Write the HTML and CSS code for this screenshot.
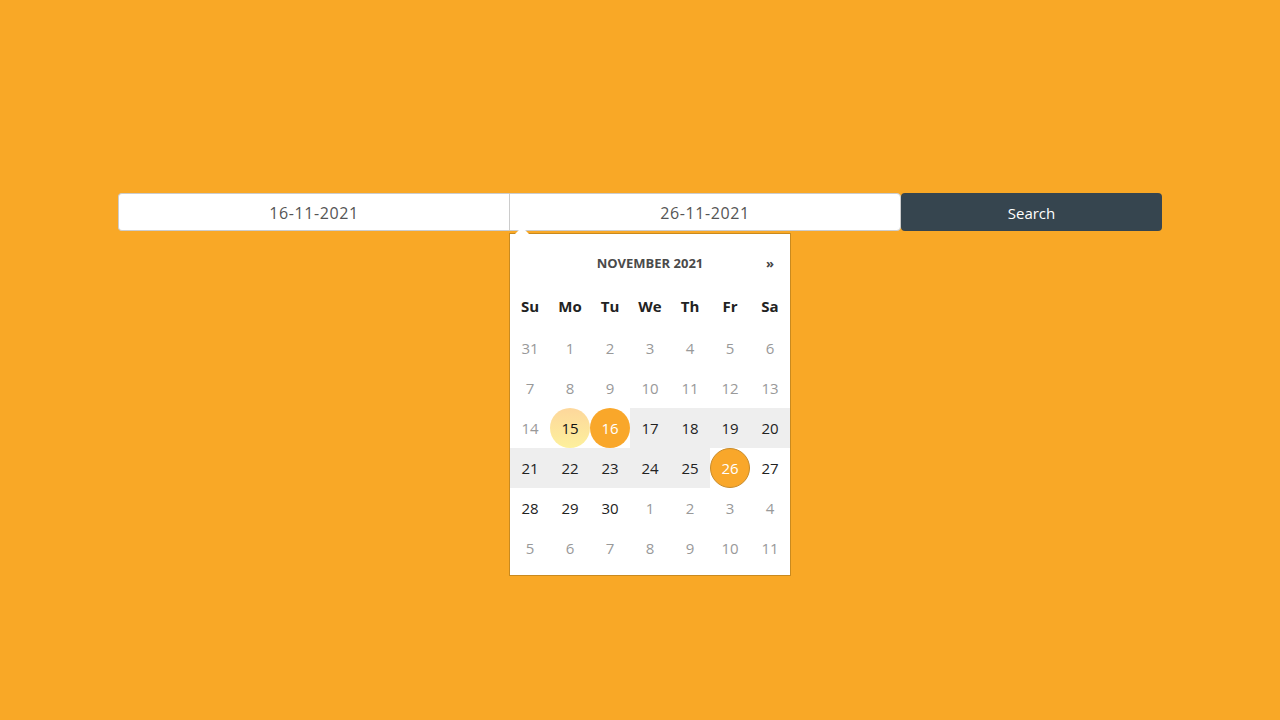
FILE: index.html
```html
<!DOCTYPE html>
<html lang="en">
<head>
<meta charset="utf-8">
<title>Date range</title>
<link rel="stylesheet" href="styles.css">
</head>
<body>
<div class="bar">
  <div class="field field-left">16-11-2021</div>
  <div class="field field-mid">26-11-2021
    <div class="picker">
      <span class="caret"></span>
      <div class="head">
        <span class="month">NOVEMBER 2021</span>
        <span class="next">»</span>
      </div>
      <div class="grid">
        <div class="dn">Su</div><div class="dn">Mo</div><div class="dn">Tu</div><div class="dn">We</div><div class="dn">Th</div><div class="dn">Fr</div><div class="dn">Sa</div>
        <div class="d off">31</div><div class="d off">1</div><div class="d off">2</div><div class="d off">3</div><div class="d off">4</div><div class="d off">5</div><div class="d off">6</div>
        <div class="d off">7</div><div class="d off">8</div><div class="d off">9</div><div class="d off">10</div><div class="d off">11</div><div class="d off">12</div><div class="d off">13</div>
        <div class="d off">14</div><div class="d"><span class="today">15</span></div><div class="d"><span class="sel">16</span></div><div class="d rng">17</div><div class="d rng">18</div><div class="d rng">19</div><div class="d rng">20</div>
        <div class="d rng">21</div><div class="d rng">22</div><div class="d rng">23</div><div class="d rng">24</div><div class="d rng">25</div><div class="d"><span class="sel sel-end">26</span></div><div class="d">27</div>
        <div class="d">28</div><div class="d">29</div><div class="d">30</div><div class="d off">1</div><div class="d off">2</div><div class="d off">3</div><div class="d off">4</div>
        <div class="d off">5</div><div class="d off">6</div><div class="d off">7</div><div class="d off">8</div><div class="d off">9</div><div class="d off">10</div><div class="d off">11</div>
      </div>
    </div>
  </div>
  <button class="search">Search</button>
</div>
</body>
</html>
```
FILE: styles.css
```css
* { box-sizing: border-box; }
html, body { margin: 0; height: 100%; }
body {
  background: #f9a826;
  font-family: "Open Sans", "Noto Sans", sans-serif;
  padding-top: 193px;
}
.bar {
  width: 1044px;
  margin: 0 auto;
  display: flex;
  height: 38px;
}
.field {
  width: 391px;
  height: 38px;
  background: #fff;
  border: 1px solid #cccccc;
  color: #555;
  font-size: 16px;
  letter-spacing: 0.6px;
  display: flex;
  align-items: center;
  justify-content: center;
  padding-top: 2px;
  position: relative;
}
.field-left { border-radius: 4px 0 0 4px; border-right: none; }
.field-mid { width: 392px; border-radius: 0 4px 4px 0; }
.search {
  width: 261px;
  height: 38px;
  background: #36454f;
  color: #fff;
  border: none;
  border-radius: 4px;
  font-family: inherit;
  font-size: 15px;
  padding: 2px 0 0;
}
.picker {
  position: absolute;
  left: -1px;
  top: 39px;
  width: 282px;
  background: #fff;
  border: 1px solid #c98a1f;
  padding: 10px 0 7px;
  letter-spacing: 0;
  z-index: 2;
}
.caret {
  position: absolute;
  left: 5px;
  top: -7px;
  width: 0; height: 0;
  border-left: 7px solid transparent;
  border-right: 7px solid transparent;
  border-bottom: 7px solid #fff;
}
.head {
  height: 38px;
  display: flex;
  align-items: center;
  justify-content: center;
  position: relative;
  color: #4a4a4a;
  font-size: 13px;
  font-weight: 700;
}
.next {
  position: absolute;
  right: 16px;
  top: 10px;
  font-size: 13px;
  font-weight: 700;
  color: #444;
}
.grid {
  margin-top: 4px;
  display: grid;
  grid-template-columns: repeat(7, 40px);
  grid-template-rows: 42px;
  grid-auto-rows: 40px;
}
.dn {
  display: flex; align-items: center; justify-content: center;
  font-size: 15px; font-weight: 700; color: #222;
  padding-bottom: 2px;
}
.d {
  display: flex; align-items: center; justify-content: center;
  font-size: 15px; color: #222;
}
.off { color: #999; }
.rng { background: #eeeeee; }
.today, .sel {
  width: 40px; height: 40px; border-radius: 50%;
  display: flex; align-items: center; justify-content: center;
}
.today { background: linear-gradient(#fdd79b, #fdf09c); color: #111; }
.sel { background: #f9a72a; color: #fff; }
.sel-end { border: 1px solid #c88b2a; }
```
